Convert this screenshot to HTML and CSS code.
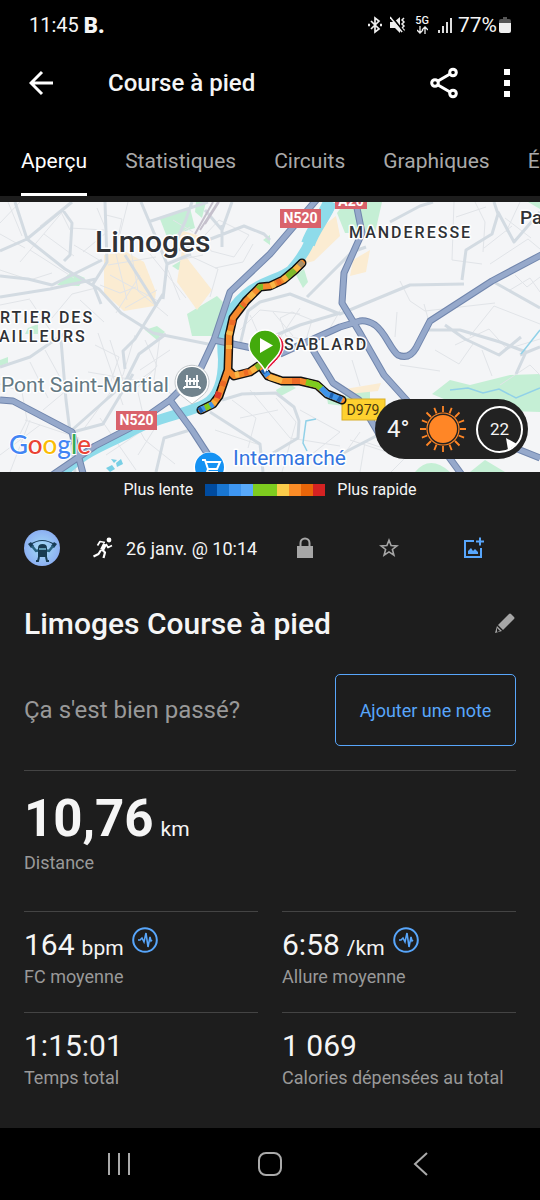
FILE: index.html
```html
<!DOCTYPE html>
<html lang="fr">
<head>
<meta charset="utf-8">
<meta name="viewport" content="width=device-width, initial-scale=1">
<title>Course à pied</title>
<link rel="stylesheet" href="styles.css">
</head>
<body>
<div class="screen">
  <div class="status">
    <span class="status-time">11:45</span>
    <span class="status-app">B.</span>
    <span class="status-icons">
      <svg width="15" height="18" viewBox="0 0 15 18" fill="none" stroke="#eee" stroke-width="1.700"><path d="M3 5l8 8-4 3V2l4 3-8 8"/><path d="M0 9h2M12 9h2" stroke-width="2.500"/></svg>
      <svg class="mute" width="16" height="18" viewBox="0 0 16 18"><path d="M0 6h4l6-5v16l-5-5H0z" fill="#eee"/><path d="M14 2l-2 2 2 2-2 2 2 2-2 2 2 2-1 2" fill="none" stroke="#eee" stroke-width="1.500"/><path d="M2 1l12 15" stroke="#000" stroke-width="2"/><path d="M0 1l12 15" stroke="#eee" stroke-width="1.500"/></svg>
      <span class="network"><span>5G</span><svg width="11" height="8" viewBox="0 0 11 8" fill="none" stroke="#eee" stroke-width="1.300"><path d="M3 0v7M0 4l3 3 3-3M8 8V1M5 4l3-3 3 3"/></svg></span>
      <svg width="15" height="17" viewBox="0 0 15 17" stroke="#ddd" stroke-width="2"><path d="M1 16v-3M5 16v-7M9 16V5M13 16V1"/></svg>
      <span class="battery-text">77%</span>
      <svg class="battery" width="12" height="17" viewBox="0 0 12 17"><path d="M4 0h4v2h2q2 0 2 2v3H0V4q0-2 2-2h2z" fill="#555"/><path d="M0 6h12v8q0 2-2 2H2q-2 0-2-2z" fill="#eee"/></svg>
    </span>
  </div>

  <header class="appbar">
    <button class="icon-btn" aria-label="Retour"><svg width="25" height="26" viewBox="0 0 25 26" fill="none" stroke="#fff" stroke-width="3"><path d="M24 13H3M13 2L2 13l11 11"/></svg></button>
    <h1>Course à pied</h1>
    <button class="icon-btn share" aria-label="Partager"><svg width="28" height="32" viewBox="0 0 28 32" fill="none" stroke="#fff" stroke-width="3"><path d="M8 14l12-7M8 18l12 7"/><circle cx="5" cy="16" r="3.300"/><circle cx="23" cy="5.500" r="3.300"/><circle cx="23" cy="26.500" r="3.300"/></svg></button>
    <button class="icon-btn" aria-label="Plus d'options"><svg width="8" height="30" viewBox="0 0 8 30" fill="#fff"><path d="M1 1h6v6H1zM1 12h6v6H1zM1 23h6v6H1z"/></svg></button>
  </header>

  <nav class="tabs">
    <a class="tab active" href="#apercu">Aperçu</a>
    <a class="tab" href="#statistiques">Statistiques</a>
    <a class="tab" href="#circuits">Circuits</a>
    <a class="tab" href="#graphiques">Graphiques</a>
    <a class="tab" href="#equipement">Équipement</a>
  </nav>

  <section class="map">
    <svg class="map-art" viewBox="0 202 540 270" role="img" aria-label="Carte du parcours">
      <rect x="0" y="202" width="540" height="270" fill="#f4f5f7"/>
      <g fill="#c5efd5">
        <path d="M160 219l30-11 5 20-28 9z"/><path d="M196 202h10l-4 16-7-6z"/><path d="M57 285l14-13 14 6-6 8z"/><path d="M172 266l10-6 5 5-9 5z"/>
        <path d="M187 314l30-18 6 6-9 34h-22z"/><path d="M345 202h37l-7 31h-30l-8-20z"/><path d="M145 330l12-4 8 6-8 8z"/>
        <path d="M432 394l18-14 20 5 40-10 30-1v38l-70-2z"/><path d="M415 472q15-18 35 0z"/><path d="M470 472l15-12 20 12z"/><path d="M345 392l25-1v13h-25z"/><path d="M296 275l8-6 4 13-5 6z"/>
        <path d="M276 390l12-7 8 5-17 9z"/><path d="M28 328l10-4v10H25z"/><path d="M0 360l8-3v6l-8 3z"/><path d="M528 202h12v7z"/><path d="M263 240l7-5v10z"/><path d="M326 392l12 2 6 12-16-2z"/>
      </g>
      <g fill="#fbecd2">
        <path d="M104 255l22-3 18 10 12 30-2 14-30 5-20-18z"/><path d="M182 250l8 12 22 28-15 20-20-28z"/><path d="M180 230l20 6-8 8-14-4z"/><path d="M318 230l18-14 4 20-26 25-16 4z"/><path d="M353 260l17-10-4 22-16 4z"/><path d="M345 389l36-6-3 8-30 3z"/>
      </g>
      <g class="street">
        <path d="M0 223l20-21M0 234l25 14M8 202l14 34M40 226l30-24M20 262l44-52M0 270l30 10 22-7M30 250l44 28M44 234l30 22M60 210l10 20M74 245l25 15M83 252l24-20-10-24M70 228l34 2M106 215l16 4-6 28M128 202l-8 32M52 318l20-24 24-6M30 300l20 30M80 300l24 22M0 305l30-6M100 285l20 8 16-6M115 250l12 50M130 245l8 46 30 25M108 265l48-8M110 275l48 26M140 275l-24 38M150 254l36 44M157 290l-32 18M168 270l12 30M173 220l20 12M160 245l30-18M205 235l14-15 30 15-15 22-23-6zM188 255l30 14-8 28M215 268l28-6 10-18M178 260l25-5"/>
        <path d="M95 345l24 12-10 30-24 5M98 333l25 72M88 372l70 12M110 340l16 50 30-22M135 335l-12 40-40 55M145 340l12 26-20 22 8 35M160 335l-6 45 22 18M170 350l-30 20M0 384l22 8 5 28-10 20M30 362l18 36M45 350l22 40-24 20M0 455l40-30M10 472l20-52M25 420l54 18-10 34M100 418l36 52M135 422l10 18 30 24M160 420l-22 35M106 455l60-40M215 430l45 15M232 400l24 18-8 30M240 418l38-8M250 390l40 48 50 8M276 398l20 24-14 50M300 410l40 22-38 30M350 440l55 18-14 14M340 460l20-28M360 472l5-30 30 10"/>
        <path d="M280 318l12-6 20 8-6 20-20-4zM273 312l20 24M300 308l-20 30M330 328l14-24M240 330l20-20 40 4M245 350l20-10M250 315l8 18M397 312l-2 25M400 281l10 20 15 10 70-8M424 304l5 18M454 202l-2 58 30 4M456 217l30-10M475 202l10 20-2 30M490 264l38-25 12 10M484 248l28-22M510 290l20-12 10 14M515 275l12 12 13-10M470 336l24-30 46 18M455 345l34-16 18 20 33-10M435 350l24 14 14-20M400 365l40 6M520 202l-14 30M505 218l26 20M450 430l16 25M500 385l30-20 10 10M482 350l10 26M352 360l8 26M330 350l18-8"/>
      </g>
      <g class="avenue">
        <path d="M15 202l12 37 38 30 34 20 22 24 32 20 60 12M27 239l-27 12M27 239l45-37M62 209l10 14-2 32-6 6M0 276l28 3 24 6 50-25M0 297l50-8 46-10M105 202l2 60-14 22 8 20M141 202l26 62-4 35M148 222l60-20M178 250l30-10 36-14 20 8 6 6M167 264l24-10M192 202l-7 20-8 17M205 210l17 20 10-28M222 225v22M163 294l-28 45-12 12 2 18M125 255l32 51M61 340l5 60 9 72M0 367l30-10 35-24M72 430l52-46 15-30 27-20M73 432l30-8 30-50"/>
        <path d="M240 345l8-34 12-9 30-8 50 20 70-29 54-1M262 341l38-16 40-12M307 297l45-45 14-5M462 280l4-30 26-16 6-20-4-12M498 212l16 30 26-30M492 281l48 27M390 222l30-16 13-4M427 330h33l40 12 26 10-10 22M520 355l20-8M222 400l20-6 34-1 18 14 5 14-1 17-25 15M210 412l50 32 3 28M190 430l-26 8-8 34M330 460l50-26M445 325l20 14 34 16 22-18"/>
      </g>
      <path d="M450 390l18-2 15 5 16-4 17 9 24-10M521 354l19-24M316 419l-10 2-3 22 4 8" fill="none" stroke="#91d1e8" stroke-width="1.500"/>
      <path d="M106 468l6-3 3 4-5 3zM116 463l5-4 2 5-6 3zM111 459l6 1-3 3z" fill="#79cfe5"/>
      <path class="river" d="M332 202c-5 13-15 22-21 37-6 14-12 22-20 31-11 9-30 11-45 24-20 17-26 34-23 65 0 20-5 38-18 45-18 10-53 14-78 30-25 12-48 20-67 43"/>
      <path d="M330 202c-5 14-16 25-22 42" fill="none" stroke="#8edbea" stroke-width="14"/>
      <path class="highway-edge" d="M318 198L270 254l-40 38-16 48-14 30-30 30-40 28-35 18-50 34M0 400l13 1 59 31 12 45M170 400l22 30 26 40M355 198l7 35-18 40-2 30 18 30 24 42 27 30 51 70M545 253l-53 28-62 40-14 27q-7 12-18 7c-8-6-12-22-23-30q-8-5-15-4l-20 6-60 27M214 340l38 8M313 350l20 33 26 17 20 34M510 446l30 12"/>
      <path class="highway" d="M318 198L270 254l-40 38-16 48-14 30-30 30-40 28-35 18-50 34M0 400l13 1 59 31 12 45M170 400l22 30 26 40M355 198l7 35-18 40-2 30 18 30 24 42 27 30 51 70M545 253l-53 28-62 40-14 27q-7 12-18 7c-8-6-12-22-23-30q-8-5-15-4l-20 6-60 27M214 340l38 8M313 350l20 33 26 17 20 34M510 446l30 12"/>
      <path d="M195 234l18-32M200 230l18-28M205 224l14-22" stroke="#c5c0cc" stroke-width="2"/>

      <g class="shields">
        <rect x="280" y="209" width="41" height="19" fill="#d9626b"/><text class="shield" x="300.500" y="223">N520</text>
        <rect x="335" y="190" width="32" height="19" fill="#d9626b"/><text class="shield" x="351" y="206">A20</text>
        <rect x="116" y="411" width="41" height="19" fill="#d9626b"/><text class="shield" x="136.500" y="425">N520</text>
        <rect x="342" y="399" width="43" height="21" fill="#fed12f" stroke="#d8ae28"/><text class="shield dark" x="363" y="415">D979</text>
      </g>

      <g class="place">
        <text class="city" x="95" y="252">Limoges</text>
        <text class="district" x="349" y="238">MANDERESSE</text>
        <text class="district" x="284" y="350">SABLARD</text>
        <text class="district" x="0" y="323">RTIER DES</text>
        <text class="district" x="-1" y="342">AILLEURS</text>
        <text class="town" x="520" y="224">Panazol</text>
        <text class="poi" x="1" y="392">Pont Saint-Martial</text>
        <text class="poi shop" x="233" y="465">Intermarché</text>
      </g>

      <path d="M192 404q-5-4-10-8a17 17 0 1 1 20 0q-5 4-10 8z" fill="#fff" stroke="#c4c9cc"/>
      <circle cx="192" cy="382" r="15" fill="#71838d"/>
      <path d="M184 387h16M185 381h14M187 375v13M197 375v13M190 378v7M194 378v7M184 387v2M200 387v2" stroke="#fff" stroke-width="1.800" fill="none"/>
      <circle cx="209.500" cy="468" r="16" fill="#fff"/><circle cx="209.500" cy="467" r="14.500" fill="#1592f3"/>
      <path d="M202 460h3l3 9h9l3-7h-14M208 469l-1 3h11" fill="none" stroke="#fff" stroke-width="2"/>

      <g fill="none" stroke-linejoin="round" stroke-linecap="round">
        <path d="M302 263l-7 7-12 10-13 6-10 1-14 14-13 17-4 18-1 34-9 26-6 8-12 6M228 370l6 6 16-4 10-7 8 11 14 5 18 0 17 4 10 9 15 6" stroke="#111" stroke-width="9"/>
        <path d="M302 263l-7 7-12 10-13 6-10 1-14 14-13 17-4 18-1 34-9 26-6 8-12 6M228 370l6 6 16-4 10-7 8 11 14 5 18 0 17 4 10 9 15 6" stroke="#f58a2c" stroke-width="6"/>
      </g>
      <g fill="none" stroke-width="6">
        <path d="M303 262l-4 4" stroke="#a98f68"/><path d="M295 270l-8 7M263 287h-3l-2 2M243 305l-2 2M256 368l4-3" stroke="#7fba2a"/>
        <path d="M299 266l-4 4M287 277l-4 3M275 284l-4 2M254 293l-5 5M230 331l-1 4M229 345v4M251 371l5-3M269 377l13 4M239 374l-4 1" stroke="#f9b646"/>
        <path d="M281 281l-4 2M245 303l-3 3M233 320l-1 5M224 381l-2 5M244 373l4-1M292 381h8" stroke="#ec6a26"/>
        <path d="M219 392l-2 6" stroke="#dd3b2b"/><path d="M215 401l-2 3" stroke="#f9ae39"/>
        <path d="M211 405l-6 3M306 382l11 3 5 4" stroke="#7ecb1f"/>
        <path d="M213 404l-3 2M205 408l-5 2M264 370l4 6M321 388l6 6 15 6" stroke="#3f94ea"/><path d="M202 409l-3 2M263 369l3 4M330 395l3 1M338 398l3 2" stroke="#1c5fae"/>
      </g>
      <path d="M267 371c5-7 17-15 17-25 0-7-5-11-9-13l-8 14z" fill="#e4163c" stroke="#fff"/>
      <path d="M265 371c-3-9-16-14-16-25a16 16 0 0 1 32 0c0 11-13 16-16 25z" fill="#43aa0c" stroke="#fff" stroke-width="1.500"/>
      <path d="M260 338v15l13-7.500z" fill="#fff"/>

      <text class="google" x="9" y="454"><tspan fill="#4285f4">G</tspan><tspan fill="#ea4335">o</tspan><tspan fill="#fbbc05">o</tspan><tspan fill="#4285f4">g</tspan><tspan fill="#34a853">l</tspan><tspan fill="#ea4335">e</tspan></text>
    </svg>
    <div class="weather">
      <span class="temp">4°</span>
      <svg width="48" height="48" viewBox="-24 -24 48 48" fill="none" stroke="#ff8626" stroke-width="1.800"><circle r="14" fill="#ff8626" stroke="none"/><circle r="16" stroke-width="1.200"/><path d="M0-17v-6M0 17v6M17 0h6M-17 0h-6M12 12l4.500 4.500M-12 12l-4.500 4.500M12-12l4.500-4.500M-12-12l-4.500-4.500M6.500-15.700l2.200-5.400M15.700-6.500l5.400-2.200M15.700 6.500l5.400 2.200M6.500 15.700l2.200 5.400M-6.500 15.700l-2.200 5.400M-15.700 6.500l-5.400 2.200M-15.700-6.500l-5.400-2.200M-6.500-15.700l-2.200-5.400"/></svg>
      <span class="wind">22<svg class="wind-arrow" width="11" height="12" viewBox="0 0 11 12"><path d="M0 0l11 6-9 6z" fill="#fff"/></svg></span>
    </div>
  </section>

  <div class="legend">
    <span>Plus lente</span>
    <span class="scale"><i class="c1"></i><i class="c2"></i><i class="c3"></i><i class="c4"></i><i class="c5"></i><i class="c5"></i><i class="c6"></i><i class="c7"></i><i class="c8"></i><i class="c9"></i></span>
    <span>Plus rapide</span>
  </div>

  <main class="content">
    <div class="meta">
      <svg class="avatar" width="36" height="36" viewBox="0 0 36 36"><defs><radialGradient id="sky"><stop offset="0" stop-color="#a5ddf5"/><stop offset="1" stop-color="#8cb0f2"/></radialGradient></defs><circle cx="18" cy="18" r="18" fill="url(#sky)"/><path d="M6 15q12-9 25 0" fill="none" stroke="#183d57" stroke-width="1.200"/><path d="M4 14l3-2 3 4-3 2zM33 14l-3-2-3 4 3 2z" fill="#183d57"/><path d="M8 16l4 5 5-1M29 16l-4 5-5-1" fill="none" stroke="#28617d" stroke-width="2.500"/><path d="M14 18q0-4 4.500-4t4.500 4v9h-9z" fill="#173b51"/><path d="M15 18h7v2h-7z" fill="#5f9bb4"/><path d="M15 27l-1 4h-2M22 27l1 4h2" fill="none" stroke="#173b51" stroke-width="2"/></svg>
      <svg class="runner" width="20" height="22" viewBox="0 0 20 22" fill="none" stroke="#fff" stroke-linejoin="round"><circle cx="16" cy="3" r="2.400" fill="#fff" stroke="none"/><path d="M12 7l-3 6" stroke-width="4"/><path d="M12 5.500L7 4.500 4.500 8.500M13 7l2 3.500 4-2" stroke-width="1.700"/><path d="M9 12.500l3 3-1.500 5.500M8 13l-2.500 4-5 2.500" stroke-width="2.200"/></svg>
      <time>26 janv. @ 10:14</time>
      <span class="actions">
        <button class="icon-btn" aria-label="Confidentialité"><svg width="18" height="22" viewBox="0 0 18 22"><rect x="1" y="9" width="16" height="12" fill="#a6a6a6"/><path d="M4.500 10V6a4.500 4.500 0 0 1 9 0v4" fill="none" stroke="#a6a6a6" stroke-width="2"/></svg></button>
        <button class="icon-btn" aria-label="Favori"><svg width="20" height="20" viewBox="0 0 20 20" fill="none" stroke="#a6a6a6" stroke-width="1.600"><path d="M10 2.200l2.100 5.400 5.800.3-4.500 3.600 1.500 5.600-4.900-3.200-4.900 3.200 1.500-5.600L2.100 7.900l5.800-.3z"/></svg></button>
        <button class="icon-btn" aria-label="Ajouter une photo"><svg width="22" height="22" viewBox="0 0 22 22" fill="none" stroke="#58a6fb" stroke-width="2"><path d="M11 4H2v16h16v-9M13 4.500h8M17 .5v8"/><path d="M5 17v-3l3-3 2 3 2-2 3 3v2z" fill="#58a6fb" stroke="none"/></svg></button>
      </span>
    </div>

    <div class="title-row">
      <h2>Limoges Course à pied</h2>
      <button class="icon-btn" aria-label="Modifier"><svg width="22" height="22" viewBox="0 0 22 22" fill="#a6a6a6"><path d="M15 2q1-1 2 0l3 3q1 1 0 2L9 18l-5-5z"/><path d="M3 14l5 5-7 2z"/><path d="M3 16l3 3-3 1z" fill="#1d1d1d"/></svg></button>
    </div>

    <div class="note-row">
      <p>Ça s'est bien passé?</p>
      <button class="note-btn">Ajouter une note</button>
    </div>

    <div class="distance">
      <p><strong>10,76</strong> km</p>
      <span class="label">Distance</span>
    </div>

    <div class="stats">
      <div class="stat"><p><b>164</b> bpm <svg width="26" height="26" viewBox="0 0 26 26" fill="none" stroke="#58a6fb" stroke-width="2"><circle cx="13" cy="13" r="11.800"/><path d="M6 13h2l2-2 2 4 2-9 2 14 2-10 1 4 1-1" stroke-width="1.600"/></svg></p><span class="label">FC moyenne</span></div>
      <div class="stat"><p><b>6:58</b> /km <svg width="26" height="26" viewBox="0 0 26 26" fill="none" stroke="#58a6fb" stroke-width="2"><circle cx="13" cy="13" r="11.800"/><path d="M6 13h2l2-2 2 4 2-9 2 14 2-10 1 4 1-1" stroke-width="1.600"/></svg></p><span class="label">Allure moyenne</span></div>
      <div class="stat"><p><b>1:15:01</b></p><span class="label">Temps total</span></div>
      <div class="stat"><p><b>1 069</b></p><span class="label">Calories dépensées au total</span></div>
    </div>
  </main>

  <nav class="sysbar">
    <button class="icon-btn" aria-label="Applications récentes"><svg width="24" height="24" viewBox="0 0 24 24" stroke="#aaa" stroke-width="2"><path d="M2 1v22M12 1v22M22 1v22"/></svg></button>
    <button class="icon-btn" aria-label="Accueil"><svg width="24" height="24" viewBox="0 0 24 24" fill="none" stroke="#aaa" stroke-width="2"><rect x="1" y="1" width="22" height="22" rx="7"/></svg></button>
    <button class="icon-btn" aria-label="Précédent"><svg width="24" height="24" viewBox="0 0 24 24" fill="none" stroke="#aaa" stroke-width="2"><path d="M18 1L6 12l12 11"/></svg></button>
  </nav>
</div>
</body>
</html>
```
FILE: styles.css
```css
* { box-sizing: border-box; }
body { margin: 0; background: #000; color: #f5f5f5; font-family: Roboto, "Noto Sans", sans-serif; }
h1, h2, p { margin: 0; font-weight: 400; }
svg { display: block; flex: none; }
button { font-family: inherit; }
.icon-btn { display: flex; padding: 0; border: 0; background: none; }
.screen { display: flex; flex-direction: column; min-height: 100vh; background: #1d1d1d; overflow: hidden; }

.status { display: flex; align-items: center; gap: 5px; height: 50px; padding: 0 29px; background: #000; font-size: 20px; }
.status-app { font-weight: 900; font-size: 22px; }
.status-icons { display: flex; align-items: center; gap: 7px; margin-left: auto; }
.network { display: flex; flex-direction: column; align-items: center; margin: 0 2px; font-size: 11px; line-height: 10px; font-weight: 500; }
.battery-text { margin-left: -2px; font-size: 21px; }
.battery { margin-left: -5px; }

.appbar { display: flex; align-items: center; height: 65px; padding: 0 29px; background: #000; }
.appbar h1 { margin-left: 54px; font-size: 24px; font-weight: 500; }
.share { margin-left: auto; margin-right: 45px; }

.tabs { display: flex; gap: 38px; height: 81px; padding-left: 21px; background: #000; }
.tab { flex: none; padding-top: 32px; border-bottom: 3px solid transparent; color: #a9a9a9; font-size: 21px; line-height: 28px; text-decoration: none; }
.tab.active { color: #fff; border-color: #fff; }

.map { position: relative; margin-top: 6px; }
.map-art { width: 100%; height: auto; font-family: Roboto, sans-serif; }
.street { fill: none; stroke: #e1e4e8; stroke-width: 1; }
.avenue { fill: none; stroke: #d3dbe2; stroke-width: 3; stroke-linejoin: round; }
.river { fill: none; stroke: #8edbea; stroke-width: 10; }
.highway-edge { fill: none; stroke: #7186ad; stroke-width: 7; stroke-linejoin: round; }
.highway { fill: none; stroke: #96a9cb; stroke-width: 5; stroke-linejoin: round; }
.shield { fill: #fff; font-size: 14px; font-weight: 700; text-anchor: middle; }
.shield.dark { fill: #4a3a10; font-weight: 400; }
.place text { paint-order: stroke; stroke: #fff; stroke-width: 3px; stroke-linejoin: round; fill: #303236; }
.place .city { font-size: 30px; font-weight: 500; }
.place .district { font-size: 16px; font-weight: 500; letter-spacing: 2px; }
.place .town { font-size: 19px; font-weight: 500; }
.place .poi { font-size: 21px; fill: #647983; }
.place .shop { fill: #3475e0; }
.google { font-family: Lato, sans-serif; font-size: 26px; font-weight: 500; paint-order: stroke; stroke: #fff; stroke-width: 2px; }

.weather { position: absolute; right: 12px; bottom: 13px; display: flex; align-items: center; justify-content: space-between; width: 153px; height: 60px; padding: 0 5px 0 12px; border-radius: 30px; background: #222; }
.temp { font-size: 24px; }
.wind { position: relative; display: grid; place-items: center; width: 47px; height: 47px; border: 2px solid #fff; border-radius: 50%; font-size: 17px; }
.wind-arrow { position: absolute; right: 4px; bottom: 1px; }

.legend { display: flex; align-items: center; justify-content: center; gap: 12px; height: 35px; font-size: 16px; }
.scale { display: flex; height: 12px; }
.scale i { width: 12px; }
.c1 { background: #004b9f; }
.c2 { background: #1976d2; }
.c3 { background: #3e96f2; }
.c4 { background: #58a9fb; }
.c5 { background: #7ecb1f; }
.c6 { background: #fbcb4a; }
.c7 { background: #fb8c27; }
.c8 { background: #e96509; }
.c9 { background: #d52222; }

.content { padding: 22px 24px 15px; }
.meta { display: flex; align-items: center; height: 38px; }
.runner { margin: 0 13px 0 33px; }
.meta time { font-size: 18px; }
.actions { display: flex; flex: 1; align-items: center; justify-content: space-between; padding: 0 31px 0 39px; }
.title-row { display: flex; align-items: center; justify-content: space-between; margin-top: 36px; height: 40px; }
.title-row h2 { font-size: 30px; font-weight: 500; }
.note-row { display: flex; align-items: center; justify-content: space-between; padding: 31px 0 24px; border-bottom: 1px solid #444; }
.note-row p { color: #999; font-size: 24px; }
.note-btn { width: 181px; height: 72px; border: 1px solid #58a6fb; border-radius: 5px; background: none; color: #58a6fb; font-size: 18px; }
.label { display: block; color: #999; font-size: 18px; line-height: 24px; }
.distance { height: 140px; padding-top: 20px; }
.distance p { display: flex; align-items: baseline; gap: 7px; height: 60px; font-size: 21px; line-height: 56px; }
.distance strong { font-size: 51px; font-weight: 700; }
.stats { display: grid; grid-template-columns: 1fr 1fr; column-gap: 24px; }
.stat { height: 101px; padding-top: 13px; border-top: 1px solid #444; }
.stat p { display: flex; align-items: baseline; gap: 7px; height: 40px; font-size: 21px; line-height: 40px; }
.stat b { font-size: 30px; font-weight: 400; }
.stat svg { align-self: flex-start; margin: 2px 0 0 1px; }

.sysbar { display: flex; align-items: center; justify-content: space-between; height: 72px; margin-top: auto; padding: 0 107px; background: #000; }
```
